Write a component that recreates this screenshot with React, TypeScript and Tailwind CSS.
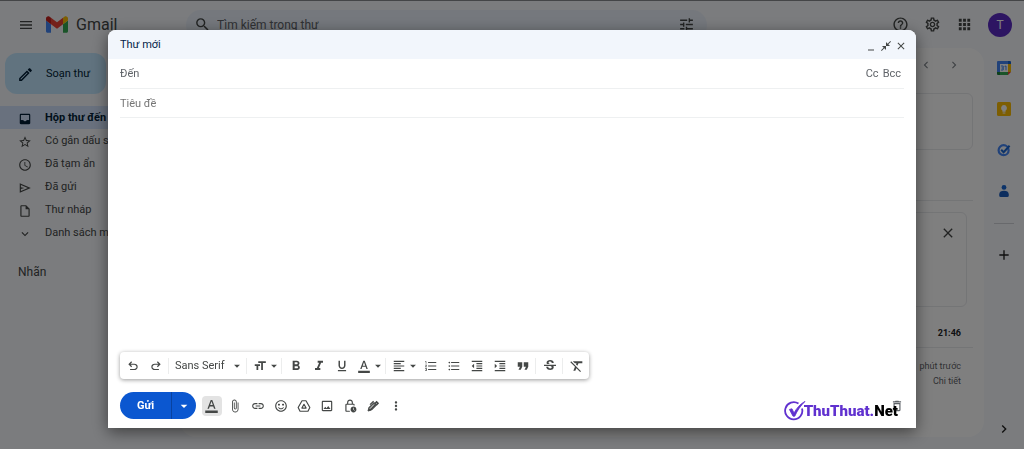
import React from 'react';
import {
  MdAccessTime,
  MdAdd,
  MdApps,
  MdArrowDropDown,
  MdAttachFile,
  MdChevronLeft,
  MdChevronRight,
  MdClose,
  MdCloseFullscreen,
  MdDeleteOutline,
  MdExpandMore,
  MdFormatAlignLeft,
  MdFormatBold,
  MdFormatClear,
  MdFormatColorText,
  MdFormatIndentDecrease,
  MdFormatIndentIncrease,
  MdFormatItalic,
  MdFormatListBulleted,
  MdFormatListNumbered,
  MdFormatQuote,
  MdFormatSize,
  MdFormatUnderlined,
  MdHelpOutline,
  MdInsertLink,
  MdMenu,
  MdMinimize,
  MdMoreVert,
  MdOutlineEdit,
  MdOutlineImage,
  MdOutlineInsertDriveFile,
  MdOutlineLockClock,
  MdOutlineSettings,
  MdSearch,
  MdSentimentSatisfiedAlt,
  MdStarBorder,
  MdStrikethroughS,
  MdTune,
} from 'react-icons/md';

const InboxIcon = () => (
  <svg viewBox="0 0 24 24" fill="currentColor" className="size-[14px]" aria-hidden="true">
    <path d="M19 3H4.99c-1.11 0-1.98.89-1.98 2L3 19c0 1.1.88 2 1.99 2H19c1.1 0 2-.9 2-2V5c0-1.11-.9-2-2-2zm0 11h-4c0 1.66-1.35 2.500-3 2.500S9 15.660 9 14H4.990V5H19v9z" />
    <path d="M4 14h5l1.500 2h3l1.500-2h5v6H4z" />
  </svg>
);

const SendIcon = () => (
  <svg viewBox="0 -960 960 960" fill="currentColor" className="size-[14px]" aria-hidden="true">
    <path d="M120-160v-640l760 320-760 320Zm80-120 474-200-474-200v140l240 60-240 60v140Z" />
  </svg>
);

const DriveIcon = () => (
  <svg viewBox="0 0 24 24" fill="none" stroke="currentColor" strokeWidth="2" strokeLinejoin="round" className="size-[14px]" aria-hidden="true">
    <path d="M8.600 3h6.800L22 14.500 18.800 21H5.200L2 14.500z" />
    <path d="m12 9 3.600 6.500H8.400z" />
  </svg>
);

interface NavItem {
  label: string;
  icon: React.ReactNode;
  active?: boolean;
}

const navItems: NavItem[] = [
  { label: 'Hộp thư đến', icon: <InboxIcon />, active: true },
  { label: 'Có gắn dấu sao', icon: <MdStarBorder /> },
  { label: 'Đã tạm ẩn', icon: <MdAccessTime /> },
  { label: 'Đã gửi', icon: <SendIcon /> },
  { label: 'Thư nháp', icon: <MdOutlineInsertDriveFile /> },
  { label: 'Danh sách mở rộng', icon: <MdExpandMore /> },
];

const GmailMark = () => (
  <svg viewBox="52 42 88 66" className="h-[17px] w-[22px]" aria-hidden="true">
    <path fill="#4285f4" d="M58 108h14V74L52 59v43c0 3.32 2.69 6 6 6" />
    <path fill="#34a853" d="M120 108h14c3.32 0 6-2.69 6-6V59l-20 15" />
    <path fill="#fbbc04" d="M120 48v26l20-15v-8c0-7.42-8.47-11.65-14.4-7.2" />
    <path fill="#ea4335" d="M72 74V48l24 18 24-18v26L96 92" />
    <path fill="#c5221f" d="M52 51v8l20 15V48l-5.6-4.2c-5.94-4.45-14.4-.22-14.4 7.2" />
  </svg>
);

const CalendarIcon = () => (
  <svg viewBox="0 0 14 14" className="size-[14px]" aria-hidden="true">
    <path fill="#4285f4" d="M1 0h10v3H3v8H0V1a1 1 0 0 1 1-1z" />
    <path fill="#1967d2" d="M11 0h2a1 1 0 0 1 1 1v2h-3z" />
    <path fill="#fbbc04" d="M11 3h3v8h-3z" />
    <path fill="#34a853" d="M3 11h8v3H3z" />
    <path fill="#188038" d="M0 11h3v3H1a1 1 0 0 1-1-1z" />
    <path fill="#ea4335" d="M11 11h3l-3 3z" />
    <path fill="#fff" d="M3 3h8v8H3z" />
    <path fill="none" stroke="#4285f4" d="M4 5h2.2v4H4M4.5 7h1.7M7.6 5.4 9 5v4.3" />
  </svg>
);

const KeepIcon = () => (
  <svg viewBox="0 0 14 14" className="size-[14px]" aria-hidden="true">
    <rect width="14" height="14" rx="1.5" fill="#fbbc04" />
    <path fill="#fff" d="M7 3a3 3 0 0 1 1.6 5.5v1.3H5.4V8.5A3 3 0 0 1 7 3zM5.6 10.4h2.8v1H5.6z" />
  </svg>
);

const TasksIcon = () => (
  <svg viewBox="0 0 14 14" className="size-[14px]" fill="none" aria-hidden="true">
    <circle cx="6.6" cy="7.2" r="5" stroke="#4285f4" strokeWidth="2.2" />
    <path d="m4.2 6.8 2.4 2.4 6-6.4" stroke="#1967d2" strokeWidth="2" />
  </svg>
);

const ContactsIcon = () => (
  <svg viewBox="0 0 14 14" className="size-[14px]" aria-hidden="true">
    <circle cx="7" cy="3.4" r="2.4" fill="#1967d2" />
    <path fill="#185abc" d="M2.2 10.400C2.200 7.800 4.400 6.800 7 6.800s4.800 1 4.800 3.600v1a1.600 1.600 0 0 1-1.600 1.600H3.800a1.600 1.600 0 0 1-1.600-1.600z" />
  </svg>
);

const UndoIcon = ({ flipped = false }: { flipped?: boolean }) => (
  <svg viewBox="0 -960 960 960" fill="currentColor" className={`size-[14px] ${flipped ? '-scale-x-100' : ''}`} aria-hidden="true">
    <path d="M280-200v-80h284q63 0 109.5-40T720-420q0-60-46.5-100T564-560H312l104 104-56 56-200-200 200-200 56 56-104 104h252q97 0 169.5 63T800-420q0 94-72.5 157T564-200H280Z" />
  </svg>
);

const SignatureIcon = () => (
  <svg viewBox="0 0 14 14" fill="none" stroke="currentColor" className="size-[14px]" aria-hidden="true">
    <path fill="currentColor" d="m2 12 1-3.6 5-5L10.6 6l-5 5z" />
    <path strokeWidth="1.6" d="m9 4.6 1.6-1.8 1.4 1.4-1.6 1.8" />
    <path stroke="#fff" strokeWidth="0.9" d="M3.8 9.8 8 5.4" />
    <path strokeWidth="1.3" d="M4 5.6 7.6 2.2" />
  </svg>
);

const LogoTick = () => (
  <svg viewBox="0 0 22 22" fill="none" stroke="#6031cf" className="size-[22px]" aria-hidden="true">
    <path strokeWidth="1.8" d="M14.5 3.6A8.6 8.6 0 1 0 18 8.4" />
    <path fill="#6031cf" strokeWidth="0.8" d="M5.4 9.4 8 8.8l2 4.2C12.6 8.2 16 4 21 1.4 16.8 5.6 13.2 10.4 10.800 16.200H9z" />
  </svg>
);

interface ToolButtonProps {
  label: string;
  children: React.ReactNode;
  menu?: boolean;
}

const ToolButton: React.FC<ToolButtonProps> = ({ label, children, menu }) => (
  <button
    type="button"
    aria-label={label}
    className={`flex h-[23px] shrink-0 items-center justify-center text-[14px] text-[#444746] ${menu ? 'w-[31px]' : 'w-[23px]'}`}
  >
    {children}
    {menu && <MdArrowDropDown className="-mr-1" />}
  </button>
);

const Separator = () => <span className="mr-0.5 ml-px h-4 w-px shrink-0 bg-[#eceded]" />;

const Header = () => (
  <header className="flex h-12 items-center border-t border-[#888a8e] pr-3 pl-[18px] text-[#444746]">
    <button type="button" aria-label="Menu chính" className="mr-3 text-[16px]">
      <MdMenu />
    </button>
    <GmailMark />
    <span className="ml-2 w-[110px] text-[16px]">Gmail</span>
    <div className="flex h-[30px] max-w-[521px] flex-1 items-center rounded-full bg-[#eaf1fb] px-2">
      <MdSearch className="text-[17px]" />
      <input
        type="search"
        aria-label="Tìm kiếm trong thư"
        placeholder="Tìm kiếm trong thư"
        className="ml-1.5 min-w-0 flex-1 bg-transparent text-[12px] placeholder:text-[#5f6368]"
      />
      <button type="button" aria-label="Tuỳ chọn tìm kiếm" className="mr-1 text-[17px]">
        <MdTune />
      </button>
    </div>
    <div className="ml-auto flex items-center gap-[15px] text-[17px]">
      <button type="button" aria-label="Hỗ trợ"><MdHelpOutline /></button>
      <button type="button" aria-label="Cài đặt"><MdOutlineSettings /></button>
      <button type="button" aria-label="Ứng dụng"><MdApps /></button>
      <button type="button" className="size-6 rounded-full bg-[#5b2bc4] text-[12px] text-white">T</button>
    </div>
  </header>
);

const Sidebar = () => (
  <aside className="w-[180px] shrink-0 text-[11px] text-[#444746]">
    <button
      type="button"
      className="mt-[5px] ml-[5px] flex h-[41px] w-[101px] items-center gap-3 rounded-xl bg-[#c2e7ff] pt-0.5 pl-3 text-[#001d35]"
    >
      <MdOutlineEdit className="text-[17px]" />
      Soạn thư
    </button>
    <nav className="mt-3">
      {navItems.map((item) => (
        <a
          key={item.label}
          href="#"
          className={`flex h-[23px] items-center gap-[13px] rounded-r-full pt-0.5 pl-[18px] ${
            item.active ? 'bg-[#d3e3fd] font-bold text-[#001d35]' : ''
          }`}
        >
          <span className="text-[14px]">{item.icon}</span>
          {item.label}
        </a>
      ))}
    </nav>
    <h2 className="mt-[19px] pl-[18px] text-[12px]">Nhãn</h2>
  </aside>
);

const MailList = () => (
  <main className="mb-3 min-w-0 flex-1 rounded-2xl bg-white pr-[11px] text-[9px] text-[#5f6368]">
    <div className="flex h-[45px] items-start justify-end gap-[14px] pt-2.5 pr-3 text-[14px] text-[#80868b]">
      <button type="button" aria-label="Mới hơn"><MdChevronLeft /></button>
      <button type="button" aria-label="Cũ hơn"><MdChevronRight /></button>
    </div>
    <div className="h-[57px] rounded-md border border-[#e8eaed]" />
    <div className="mt-[50px] border-t border-[#e8eaed]" />
    <div className="mt-[11px] mr-1.5 flex h-[95px] items-start justify-end rounded-md border border-[#e8eaed] px-2.5 py-3 text-[16px]">
      <button type="button" aria-label="Đóng" className="text-[#444746]"><MdClose /></button>
    </div>
    <div className="mt-[11px] flex h-[30px] items-center justify-end border-b border-[#e8eaed] pt-0.5 pr-3 font-bold text-[#202124]">
      21:46
    </div>
    <div className="mt-[11px] pr-3 text-right leading-[15px]">
      <p>1 phút trước</p>
      <a href="#">Chi tiết</a>
    </div>
  </main>
);

const SidePanel = () => (
  <aside className="flex w-10 shrink-0 flex-col items-center pt-[13px] text-[#1f1f1f]">
    <div className="flex flex-col gap-[27px]">
      <CalendarIcon />
      <KeepIcon />
      <TasksIcon />
      <ContactsIcon />
    </div>
    <span className="mt-[25px] mb-[23px] h-px w-5 bg-[#d0d3d8]" />
    <button type="button" aria-label="Tải tiện ích bổ sung" className="text-[16px]"><MdAdd /></button>
    <button type="button" aria-label="Ẩn bảng điều khiển bên" className="mt-auto mb-3 text-[16px]"><MdChevronRight /></button>
  </aside>
);

const FormatToolbar = () => (
  <div className="flex h-[27px] items-center self-start rounded-sm bg-white px-px shadow-[0_1px_4px_rgba(0,0,0,0.4)]">
    <ToolButton label="Hoàn tác"><UndoIcon /></ToolButton>
    <ToolButton label="Làm lại"><UndoIcon flipped /></ToolButton>
    <Separator />
    <div className="relative flex w-[74px] items-center text-[#444746]">
      <select aria-label="Phông chữ" className="w-full appearance-none bg-transparent pt-0.5 pl-1 text-[11px]">
        <option>Sans Serif</option>
      </select>
      <MdArrowDropDown className="pointer-events-none absolute right-px text-[14px]" />
    </div>
    <Separator />
    <ToolButton label="Kích thước" menu><MdFormatSize /></ToolButton>
    <Separator />
    <ToolButton label="In đậm"><MdFormatBold className="text-[16px]" /></ToolButton>
    <ToolButton label="In nghiêng"><MdFormatItalic className="text-[16px]" /></ToolButton>
    <ToolButton label="Gạch chân"><MdFormatUnderlined /></ToolButton>
    <ToolButton label="Màu văn bản" menu><MdFormatColorText /></ToolButton>
    <Separator />
    <ToolButton label="Căn chỉnh" menu><MdFormatAlignLeft /></ToolButton>
    <ToolButton label="Danh sách đánh số"><MdFormatListNumbered /></ToolButton>
    <ToolButton label="Danh sách dấu đầu dòng"><MdFormatListBulleted /></ToolButton>
    <ToolButton label="Giảm thụt lề"><MdFormatIndentDecrease /></ToolButton>
    <ToolButton label="Tăng thụt lề"><MdFormatIndentIncrease /></ToolButton>
    <ToolButton label="Trích dẫn"><MdFormatQuote className="text-[18px]" /></ToolButton>
    <Separator />
    <ToolButton label="Gạch ngang"><MdStrikethroughS className="text-[16px]" /></ToolButton>
    <Separator />
    <ToolButton label="Xoá định dạng"><MdFormatClear className="text-[16px]" /></ToolButton>
  </div>
);

const ComposeDialog = () => (
  <section
    role="dialog"
    aria-label="Thư mới"
    className="relative flex flex-1 flex-col overflow-hidden rounded-t-lg bg-white text-[11px] text-[#5f6368]"
  >
    <div className="flex h-[29px] shrink-0 items-center justify-between bg-[#f2f6fc] px-3 pt-0.5 text-[#041e49]">
      <h1>Thư mới</h1>
      <div className="-mr-[3px] flex gap-[3px] text-[12px] text-[#444746]">
        <button type="button" aria-label="Thu nhỏ"><MdMinimize /></button>
        <button type="button" aria-label="Thoát toàn màn hình"><MdCloseFullscreen /></button>
        <button type="button" aria-label="Đóng"><MdClose /></button>
      </div>
    </div>
    <div className="flex flex-1 flex-col px-3 pb-[9px]">
      <div className="flex h-[30px] items-center gap-1 border-b border-[#eef0f1] pt-0.5">
        <label htmlFor="to">Đến</label>
        <input id="to" type="text" className="min-w-0 flex-1 outline-none" />
        <button type="button">Cc</button>
        <button type="button" className="mr-[3px]">Bcc</button>
      </div>
      <div className="flex h-[29px] items-center border-b border-[#eef0f1] pt-0.5">
        <input
          type="text"
          aria-label="Tiêu đề"
          placeholder="Tiêu đề"
          className="w-full outline-none placeholder:text-[#757575]"
        />
      </div>
      <textarea aria-label="Nội dung thư" className="w-full flex-1 resize-none outline-none" />
      <FormatToolbar />
      <div className="mt-[13px] flex h-[27px] items-center">
        <div className="mr-1 flex h-full w-[76px] overflow-hidden rounded-full bg-[#0b57d0] text-white">
          <button type="button" className="flex-1 pt-0.5 font-bold">Gửi</button>
          <button type="button" aria-label="Tuỳ chọn gửi khác" className="flex w-[25px] items-center justify-center border-l border-[#0842a0] text-[16px]">
            <MdArrowDropDown />
          </button>
        </div>
        <ToolButton label="Tuỳ chọn định dạng">
          <span className="flex size-5 items-center justify-center rounded-sm bg-[#e3e3e3]">
            <MdFormatColorText className="text-[15px]" />
          </span>
        </ToolButton>
        <ToolButton label="Đính kèm tệp"><MdAttachFile /></ToolButton>
        <ToolButton label="Chèn liên kết"><MdInsertLink /></ToolButton>
        <ToolButton label="Chèn biểu tượng cảm xúc"><MdSentimentSatisfiedAlt /></ToolButton>
        <ToolButton label="Chèn tệp bằng Drive"><DriveIcon /></ToolButton>
        <ToolButton label="Chèn ảnh"><MdOutlineImage /></ToolButton>
        <ToolButton label="Chế độ bảo mật"><MdOutlineLockClock /></ToolButton>
        <ToolButton label="Chèn chữ ký"><SignatureIcon /></ToolButton>
        <ToolButton label="Tuỳ chọn khác"><MdMoreVert /></ToolButton>
        <button type="button" aria-label="Huỷ thư nháp" className="ml-auto text-[14px]">
          <MdDeleteOutline />
        </button>
      </div>
    </div>
    {/* Site watermark laid over the corner of the dialog */}
    <div className="pointer-events-none absolute right-[18px] bottom-1.5 flex items-center font-['Roboto'] text-[15px] font-black">
      <LogoTick />
      <span className="-ml-0.5 text-[#6031cf]">ThuThuat.</span>
      <span className="text-black">Net</span>
    </div>
  </section>
);

export default function App() {
  return (
    <div className="flex h-screen flex-col overflow-hidden bg-[#f6f8fc] font-['Roboto',sans-serif]">
      <Header />
      <div className="flex min-h-0 flex-1">
        <Sidebar />
        <MailList />
        <SidePanel />
      </div>
      <div className="fixed inset-0 flex bg-black/50 px-[108px] pt-[30px] pb-[21px]">
        <div className="flex flex-1 rounded-t-lg shadow-[0_4px_16px_rgba(0,0,0,0.5)]">
          <ComposeDialog />
        </div>
      </div>
    </div>
  );
}
